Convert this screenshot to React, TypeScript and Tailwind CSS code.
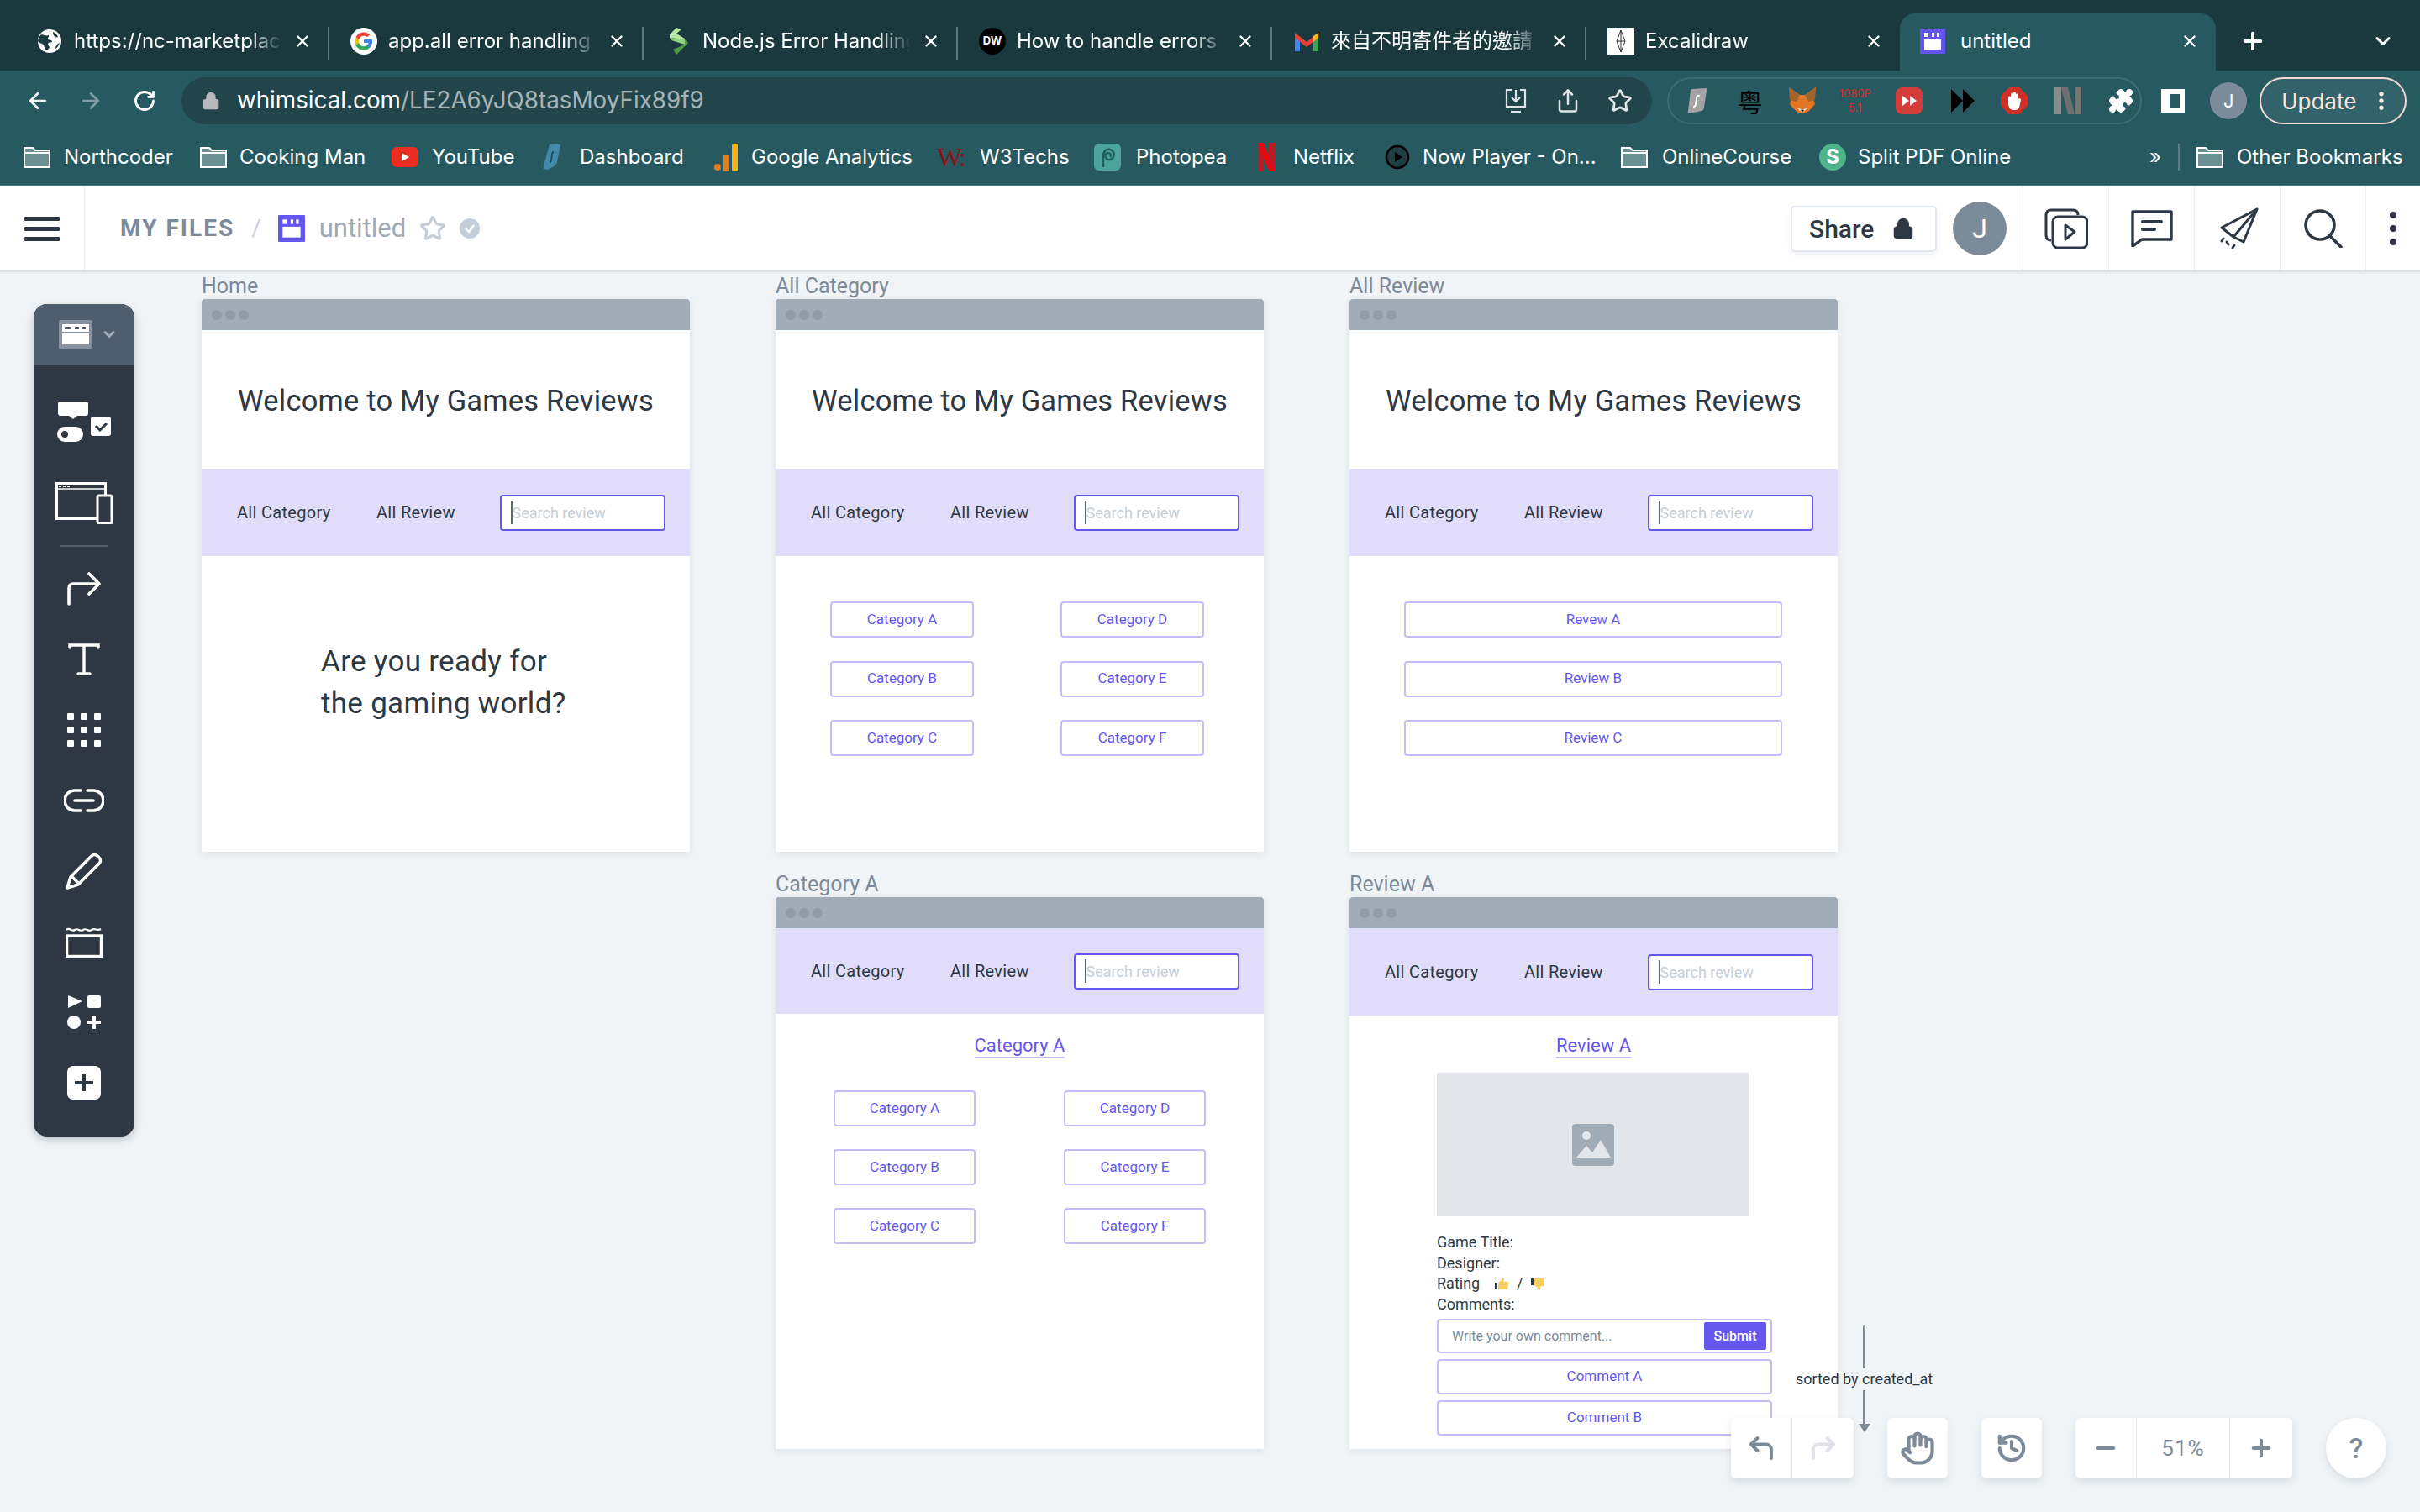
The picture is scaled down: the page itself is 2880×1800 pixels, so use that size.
import React from 'react';
import { ChevronDown, CornerUpLeft, CornerUpRight, EllipsisVertical, Hand, History, Lock, Minus, Plus, Puzzle, RotateCw, Share, Star, X, ArrowLeft, ArrowRight } from 'lucide-react';

const Whimsical = ({ size = 30 }: { size?: number }) => (
  <svg width={size} height={size} viewBox="0 0 30 30" className="shrink-0">
    <rect width="30" height="30" rx="1" fill="#6355ee" />
    <rect x="5" y="5" width="5" height="5" fill="#fff" />
    <rect x="14" y="5" width="3" height="5" fill="#fff" />
    <rect x="20" y="5" width="3" height="5" fill="#fff" />
    <rect x="5" y="13" width="20" height="12" fill="#fff" />
  </svg>
);

const Globe = () => (
  <svg width="30" height="30" viewBox="0 0 30 30">
    <circle cx="15" cy="15" r="14" fill="#fff" />
    <path d="M5 7c4 1 6 2 9 1 1 2-2 3-1 5 2 1 5 0 5 3-2 1-4 0-5 2l2 5c-2 2-3 3-5 3-1-3-1-6-4-8-2-1-4-1-5-3 0-3 2-6 4-8zM19 4c2 1 5 3 6 6-2 1-4 0-5-2-1-1-1-3-1-4zM27 17c-1 3-3 6-5 7 0-3 2-6 5-7z" fill="#19393f" />
  </svg>
);

const GoogleG = () => (
  <svg width="32" height="32" viewBox="0 0 32 32">
    <circle cx="16" cy="16" r="16" fill="#fff" />
    <path d="M26 16.2c0-.8-.1-1.500-.2-2.200H16v4.100h5.600c-.2 1.300-1 2.500-2.100 3.200v2.600h3.400c2-1.800 3.100-4.500 3.100-7.700z" fill="#4285f4" />
    <path d="M16 26.500c2.800 0 5.200-.9 6.900-2.600l-3.400-2.600c-.9.600-2.100 1-3.500 1-2.700 0-5-1.800-5.800-4.300H6.200v2.700c1.700 3.500 5.400 5.800 9.800 5.800z" fill="#34a853" />
    <path d="M10.200 18c-.2-.6-.3-1.300-.3-2s.1-1.400.3-2v-2.700H6.700C6 12.700 5.600 14.300 5.600 16s.4 3.300 1.100 4.700z" fill="#fbbc05" />
    <path d="M16 9.700c1.500 0 2.900.5 4 1.600l3-3C21.200 6.600 18.800 5.600 16 5.600c-4.400 0-8.100 2.300-9.300 5.700l3.500 2.700c.8-2.500 3.100-4.300 5.800-4.300z" fill="#ea4335" />
  </svg>
);

const TabStack = () => (
  <svg width="28" height="32" viewBox="0 0 28 32">
    <path d="M12 0l6 2-6 5 10 6v1L4 12V8z" fill="#b6e6a4" />
    <path d="M4 12l18 2v6L6 15z" fill="#8fd07a" />
    <path d="M22 14l4 4-14 14-4-6 14-6z" fill="#4f9a44" />
  </svg>
);

const Gmail = () => (
  <svg width="30" height="30" viewBox="0 0 30 30">
    <path d="M1 5v22h6V13z" fill="#4285f4" />
    <path d="M29 5v22h-6V13z" fill="#34a853" />
    <path d="M1 5l14 11L29 5v6L15 22 1 11z" fill="#ea4335" />
    <path d="M23 9l6-4v6l-6 5z" fill="#fbbc05" />
  </svg>
);

const TabIcon = ({ kind }: { kind: string }) => {
  if (kind === 'globe') return <Globe />;
  if (kind === 'google') return <GoogleG />;
  if (kind === 'stack') return <TabStack />;
  if (kind === 'gmail') return <Gmail />;
  if (kind === 'whimsical') return <Whimsical />;
  if (kind === 'dw') {
    return <span className="flex h-[32px] w-[32px] items-center justify-center rounded-full bg-black text-[13px] font-bold text-white">DW</span>;
  }
  return (
    <svg width="32" height="32" viewBox="0 0 32 32">
      <rect width="32" height="32" fill="#fff" />
      <path d="M16 3l5 13-5 13-5-13zM16 3v26M11 16h10" fill="none" stroke="#333" strokeWidth="1" />
    </svg>
  );
};

const tabs = [
  { icon: 'globe', title: 'https://nc-marketplace' },
  { icon: 'google', title: 'app.all error handling' },
  { icon: 'stack', title: 'Node.js Error Handling' },
  { icon: 'dw', title: 'How to handle errors' },
  { icon: 'gmail', title: '來自不明寄件者的邀請' },
  { icon: 'excalidraw', title: 'Excalidraw' },
];

function TabStrip() {
  return (
    <div className="flex h-[84px] items-end bg-[#19393f] pl-[17px] pr-[20px]">
      {tabs.map((t, i) => (
        <div key={i} className="relative flex h-[68px] w-[374px] items-center pb-[2px] pl-[25px] pr-[20px]">
          <div className="flex w-[34px] shrink-0 justify-center"><TabIcon kind={t.icon} /></div>
          <span className="ml-[12px] w-[248px] overflow-hidden whitespace-nowrap text-[24px] text-white [mask-image:linear-gradient(to_right,black_84%,transparent)]">{t.title}</span>
          <X size={22} strokeWidth={2.6} className="ml-auto shrink-0 text-white" />
          {i !== 5 && <div className="absolute -right-[1px] top-[16px] h-[40px] w-[2px] bg-[#5c7a7f]" />}
        </div>
      ))}
      <div className="flex h-[68px] w-[376px] items-center rounded-t-[18px] bg-[#275960] pb-[2px] pl-[24px] pr-[20px]">
        <Whimsical />
        <span className="ml-[18px] text-[24px] text-white">untitled</span>
        <X size={22} strokeWidth={2.6} className="ml-auto text-white" />
      </div>
      <div className="flex h-[68px] flex-1 items-center pb-[2px]">
        <Plus size={32} strokeWidth={3} className="ml-[28px] text-white" />
        <ChevronDown size={28} strokeWidth={2.6} className="ml-auto mr-[10px] text-white" />
      </div>
    </div>
  );
}

const FoxIcon = () => (
  <svg width="34" height="32" viewBox="0 0 34 32">
    <path d="M1 0l13 9h6L33 0l-3 14 2 6-7 8-5 3h-6l-5-3-7-8 2-6z" fill="#e27625" />
    <path d="M1 0l13 9-4 8-8-2zM33 0L20 9l4 8 8-2z" fill="#a0642c" />
    <path d="M11 25l6 6 6-6-3 0-3 2-3-2z" fill="#e0c6ad" />
    <path d="M15 27h4l-2 3z" fill="#222" />
  </svg>
);

const ExtensionIcons = () => (
  <div className="flex h-[56px] w-[565px] items-center rounded-full border-[2px] border-[#3f6d74] pl-[10px]">
    <div className="flex w-[48px] justify-center">
      <svg width="24" height="30" viewBox="0 0 24 30"><path d="M6 1l16-1c1 0 2 1 1 3l-3 20c0 2-1 3-3 4L3 30c-2 0-3-1-2-3L4 3c0-1 1-2 2-2z" fill="#a3a3a6" /><path d="M15 9c-3-1-4 1-4 3l-1 7c0 2-1 3-3 3" fill="none" stroke="#fff" strokeWidth="1.800" /></svg>
    </div>
    <div className="ml-[16px] flex w-[48px] justify-center text-[30px] leading-none text-black [font-family:'Noto_Sans_CJK_SC',sans-serif]">粤</div>
    <div className="ml-[15px] flex w-[48px] justify-center"><FoxIcon /></div>
    <div className="ml-[16px] flex w-[48px] flex-col items-center text-[13px] leading-[17px] text-[#d12c2c] [font-family:Inter,sans-serif]"><span>1080P</span><span>5.1</span></div>
    <div className="ml-[17px] flex w-[48px] justify-center">
      <svg width="32" height="32" viewBox="0 0 32 32"><rect width="32" height="32" rx="8" fill="#d43c3c" /><path d="M8 10l8 6-8 6zM17 10l8 6-8 6z" fill="#fff" /></svg>
    </div>
    <div className="ml-[17px] flex w-[48px] justify-center">
      <svg width="30" height="28" viewBox="0 0 30 28"><path d="M1 0l14 14L1 28zM15 0l14 14-14 14z" fill="#000" /></svg>
    </div>
    <div className="ml-[14px] flex w-[48px] justify-center">
      <svg width="32" height="32" viewBox="0 0 32 32"><path d="M10 0h12l10 10v12L22 32H10L0 22V10z" fill="#d03028" /><path d="M9 19V12c0-2 3-2 3 0V8c0-2 3-2 3 0V7c0-2 3-2 3 0v2c0-2 3-2 3 0v5c1-2 3-1 3 1l-2 9c-1 2-3 3-5 3h-2c-3 0-6-3-6-8z" fill="#fff" /></svg>
    </div>
    <div className="ml-[17px] flex w-[48px] justify-center">
      <svg width="32" height="32" viewBox="0 0 32 32"><rect width="8" height="32" fill="#8a8a8a" /><path d="M8 0h8l8 32h-8z" fill="#6f6f6f" /><rect x="24" width="8" height="32" fill="#777" /></svg>
    </div>
    <div className="ml-[16px] flex w-[48px] justify-center"><Puzzle size={32} fill="#fff" strokeWidth={1} className="text-white" /></div>
  </div>
);

function Toolbar() {
  return (
    <div className="flex h-[72px] items-center bg-[#275960] pl-[30px] pr-[16px]">
      <ArrowLeft size={30} strokeWidth={2.200} className="text-white" />
      <ArrowRight size={30} strokeWidth={2.200} className="ml-[33px] text-[#7fa0a4]" />
      <RotateCw size={28} strokeWidth={2.400} className="ml-[35px] text-white" />
      <div className="ml-[30px] flex h-[56px] w-[1752px] items-center rounded-full bg-[#22454c] pl-[24px] pr-[23px]">
        <Lock size={22} fill="#b5b8bc" strokeWidth={2.400} className="text-[#b5b8bc]" />
        <span className="ml-[20px] text-[27.800px] text-white">whimsical.com<span className="text-[#a3b5b8]">/LE2A6yJQ8tasMoyFix89f9</span></span>
        <div className="ml-auto flex items-center gap-[32px] text-[#dfe6e7]">
          <svg width="30" height="30" viewBox="0 0 30 30" fill="none" stroke="currentColor" strokeWidth="2.200"><path d="M10 2H4v20h22V2h-6M15 2v14M10 11l5 5 5-5M9 28h12" /></svg>
          <Share size={30} strokeWidth={2} />
          <Star size={30} strokeWidth={2.200} />
        </div>
      </div>
      <div className="ml-[18px]"><ExtensionIcons /></div>
      <div className="ml-[23px] h-[28px] w-[28px] border-[6px] border-l-[10px] border-white" />
      <div className="ml-[30px] flex h-[44px] w-[44px] items-center justify-center rounded-full bg-[#7c8b99] text-[22px] text-white">J</div>
      <div className="ml-[15px] flex h-[56px] w-[175px] items-center rounded-full border-[2px] border-[#f3d9d5] bg-[#33636a] pl-[24px] text-[26px] text-[#f7e3df]">
        Update
        <EllipsisVertical size={28} strokeWidth={2.600} className="ml-[16px]" />
      </div>
    </div>
  );
}

const Folder = () => (
  <svg width="32" height="26" viewBox="0 0 32 26" className="shrink-0">
    <path d="M1 2h10l3 3h17v20H1z" fill="#6b9094" stroke="#fff" strokeWidth="2" />
    <path d="M1 8h30" stroke="#fff" strokeWidth="2" />
    <path d="M2 9h28v7H2z" fill="#fff" fillOpacity="0.9" />
    <path d="M2 9h28v13H2z" fill="#6b9094" />
  </svg>
);

const BookmarkIcon = ({ kind }: { kind: string }) => {
  if (kind === 'folder') return <Folder />;
  if (kind === 'yt') return <svg width="32" height="24" viewBox="0 0 32 24" className="shrink-0"><rect width="32" height="24" rx="6" fill="#e92e21" /><path d="M12 7l9 5-9 5z" fill="#fff" /></svg>;
  if (kind === 'dash') return <svg width="22" height="32" viewBox="0 0 22 32" className="shrink-0"><path d="M8 1c5-1 12-1 13 1l-4 20c-1 4-6 7-12 9-3 0-5-2-4-5z" fill="#4289a8" /><path d="M13 10c-2 0-2 2-2 3l-1 6c0 2-1 3-2 3" fill="none" stroke="#1d4f63" strokeWidth="1.800" /></svg>;
  if (kind === 'ga') return <svg width="30" height="34" viewBox="0 0 30 34" className="shrink-0"><circle cx="5" cy="29" r="4" fill="#e57d1c" /><rect x="12" y="14" width="7" height="20" fill="#e57d1c" /><rect x="22" y="1" width="7" height="33" rx="2" fill="#f6b21b" /></svg>;
  if (kind === 'w3') return <span className="w-[34px] shrink-0 text-[32px] leading-none tracking-[-3px] text-[#8a1414] [font-family:'Liberation_Serif',serif]">W:</span>;
  if (kind === 'pea') return <svg width="32" height="32" viewBox="0 0 32 32" className="shrink-0"><rect width="32" height="32" rx="6" fill="#4ba59b" /><path d="M11 28V14c0-5 4-8 8-7s6 5 4 9-7 4-9 1 0-6 3-6 4 3 2 5" fill="none" stroke="#1d5f5a" strokeWidth="2.400" /></svg>;
  if (kind === 'netflix') return <svg width="20" height="34" viewBox="0 0 20 34" className="shrink-0"><path d="M0 0h7v34l-7 0z" fill="#b81d24" /><path d="M13 0h7v34h-7z" fill="#b81d24" /><path d="M0 0h7l13 34h-7z" fill="#e50914" /></svg>;
  if (kind === 'now') return <svg width="30" height="30" viewBox="0 0 30 30" className="shrink-0"><circle cx="15" cy="15" r="13" fill="#1f3f45" stroke="#000" strokeWidth="2.600" /><path d="M12 9l9 6-9 6z" fill="#000" /></svg>;
  return <span className="flex h-[32px] w-[32px] shrink-0 items-center justify-center rounded-full bg-[#4eb48a] text-[24px] font-bold text-white">S</span>;
};

function Bookmarks() {
  return (
    <div className="flex h-[66px] items-center border-b-[2px] border-[#4a767c] bg-[#275960] pb-[2px] pl-[28px] text-[24px] text-white">
      <div className="flex w-[210px] items-center gap-[16px]"><BookmarkIcon kind="folder" />Northcoder</div>
      <div className="flex w-[228px] items-center gap-[15px]"><BookmarkIcon kind="folder" />Cooking Man</div>
      <div className="flex w-[180px] items-center gap-[16px]"><BookmarkIcon kind="yt" />YouTube</div>
      <div className="flex w-[203px] items-center gap-[22px]"><BookmarkIcon kind="dash" />Dashboard</div>
      <div className="flex w-[266px] items-center gap-[15px]"><BookmarkIcon kind="ga" />Google Analytics</div>
      <div className="flex w-[187px] items-center gap-[17px]"><BookmarkIcon kind="w3" />W3Techs</div>
      <div className="flex w-[195px] items-center gap-[18px]"><BookmarkIcon kind="pea" />Photopea</div>
      <div className="flex w-[151px] items-center gap-[22px]"><BookmarkIcon kind="netflix" />Netflix</div>
      <div className="flex w-[281px] items-center gap-[15px]"><BookmarkIcon kind="now" />Now Player - On...</div>
      <div className="flex w-[236px] items-center gap-[17px]"><BookmarkIcon kind="folder" />OnlineCourse</div>
      <div className="flex w-[393px] items-center gap-[14px]"><BookmarkIcon kind="s" />Split PDF Online</div>
      <span className="w-[34px] text-[24px]">»</span>
      <div className="h-[32px] w-[2px] bg-[#5c7a7f]" />
      <div className="ml-[20px] flex items-center gap-[16px]"><BookmarkIcon kind="folder" />Other Bookmarks</div>
    </div>
  );
}

function AppHeader() {
  return (
    <header className="relative z-10 flex h-[100px] items-stretch bg-white shadow-[0_2px_3px_rgba(45,56,68,0.12)] [font-family:Roboto,sans-serif]">
      <div className="flex w-[101px] flex-col items-start justify-center gap-[7px] border-r-[1px] border-[#edf0f3] pl-[28px]">
        <div className="h-[5px] w-[44px] rounded-full bg-[#2d3844]" />
        <div className="h-[5px] w-[44px] rounded-full bg-[#2d3844]" />
        <div className="h-[5px] w-[44px] rounded-full bg-[#2d3844]" />
      </div>
      <div className="flex flex-1 items-center pl-[42px]">
        <span className="text-[28px] font-bold tracking-[2px] text-[#7c8a99]">MY FILES</span>
        <span className="ml-[20px] text-[28px] text-[#c9d1d9]">/</span>
        <span className="ml-[20px]"><Whimsical size={32} /></span>
        <span className="ml-[17px] text-[31px] text-[#a0aab5]">untitled</span>
        <Star size={32} strokeWidth={2.400} className="ml-[16px] text-[#c5ced8]" />
        <svg width="24" height="24" viewBox="0 0 24 24" className="ml-[16px]"><circle cx="12" cy="12" r="12" fill="#c5ced8" /><path d="M7 12l4 4 6-8" fill="none" stroke="#fff" strokeWidth="2.400" /></svg>
      </div>
      <div className="flex items-center">
        <div className="flex h-[55px] w-[174px] items-center rounded-[5px] border-[2px] border-[#e2e8f0] pl-[20px] text-[30px] font-medium text-[#2d3844] shadow-[0_3px_6px_rgba(45,56,68,0.06)]">
          Share
          <Lock size={26} strokeWidth={2.800} fill="#2d3844" className="ml-[22px]" />
        </div>
        <div className="ml-[19px] flex h-[64px] w-[64px] items-center justify-center rounded-full bg-[#7c8b99] text-[32px] text-white">J</div>
        <div className="w-[19px]" />
      </div>
      <div className="flex w-[102px] items-center justify-center border-l-[1px] border-[#edf0f3]">
        <svg width="52" height="48" viewBox="0 0 52 48" fill="none" stroke="#2d3844" strokeWidth="3">
          <path d="M8 38c-4 0-6-2-6-6V8c0-4 2-6 6-6h26c4 0 6 2 6 6" />
          <rect x="10" y="10" width="41" height="37" rx="6" />
          <path d="M25 20l11 8-11 9z" strokeLinejoin="round" />
        </svg>
      </div>
      <div className="flex w-[102px] items-center justify-center border-l-[1px] border-[#edf0f3]">
        <svg width="50" height="44" viewBox="0 0 50 44" fill="none" stroke="#2d3844" strokeWidth="3.400" strokeLinejoin="round">
          <path d="M2 2h46v33H13L2 43z" />
          <path d="M14 14h22M14 23h14" strokeLinecap="round" strokeWidth="4" />
        </svg>
      </div>
      <div className="flex w-[102px] items-center justify-center border-l-[1px] border-[#edf0f3]">
        <svg width="50" height="50" viewBox="0 0 50 50" fill="none" stroke="#2d3844" strokeWidth="3" strokeLinejoin="round" strokeLinecap="round">
          <path d="M48 2L6 24l14 11 12 6 16-39zM48 2L20 35" />
          <path d="M8 37l-2 3M14 44l-2-3M19 48l2-3" />
        </svg>
      </div>
      <div className="flex w-[102px] items-center justify-center border-l-[1px] border-[#edf0f3]">
        <svg width="46" height="46" viewBox="0 0 46 46" fill="none" stroke="#2d3844" strokeWidth="3.600" strokeLinecap="round">
          <circle cx="19" cy="19" r="17" />
          <path d="M31 32l13 13" />
        </svg>
      </div>
      <div className="flex w-[65px] flex-col items-center justify-center gap-[8px] border-l-[1px] border-[#edf0f3]">
        <div className="h-[8px] w-[8px] rounded-full bg-[#2d3844]" />
        <div className="h-[8px] w-[8px] rounded-full bg-[#2d3844]" />
        <div className="h-[8px] w-[8px] rounded-full bg-[#2d3844]" />
      </div>
    </header>
  );
}

function LeftTools() {
  return (
    <div className="absolute left-[40px] top-[40px] z-10 h-[991px] w-[120px] overflow-hidden rounded-[16px] bg-[#2d3844] shadow-[0_4px_10px_rgba(45,56,68,0.25)]">
      <div className="flex h-[72px] items-center bg-[#4f5e6e] pl-[30px]">
        <div className="flex h-[34px] w-[40px] items-center justify-center rounded-[2px] bg-[#8793a0]">
          <svg width="32" height="24" viewBox="0 0 32 24"><rect width="32" height="24" fill="#fff" /><rect x="3" y="3" width="8" height="3" fill="#4f5e6e" /><rect x="15" y="3" width="5" height="3" fill="#4f5e6e" /><rect x="23" y="3" width="5" height="3" fill="#4f5e6e" /><rect y="9" width="32" height="2" fill="#8793a0" /></svg>
        </div>
        <ChevronDown size={20} strokeWidth={3.600} className="ml-[10px] text-[#a3adb8]" />
      </div>
      <div className="flex flex-col items-center pt-[19px]">
        <div className="flex h-[97px] items-center">
          <svg width="64" height="48" viewBox="0 0 64 48">
            <rect x="1" width="36" height="17" rx="3" fill="#fff" /><path d="M14 17h10l-5 4z" fill="#fff" />
            <rect y="30" width="31" height="18" rx="9" fill="#fff" /><circle cx="9" cy="39" r="4" fill="#2d3844" />
            <rect x="40" y="18" width="24" height="23" rx="3" fill="#fff" /><path d="M46 29l5 5 8-8" fill="none" stroke="#2d3844" strokeWidth="3" />
          </svg>
        </div>
        <div className="flex h-[97px] items-center">
          <svg width="68" height="50" viewBox="0 0 68 50" fill="none" stroke="#fff" strokeWidth="3">
            <rect x="1.500" y="1.500" width="58" height="42" />
            <path d="M1.500 8h58" strokeWidth="1.500" />
            <path d="M4 5h3M9 5h3M14 5h3" strokeWidth="2" />
            <rect x="50" y="16" width="17" height="33" rx="2" fill="#2d3844" />
          </svg>
        </div>
        <div className="mt-[2px] h-[2px] w-[56px] bg-[#4f5e6e]" />
        <div className="mt-[8px] flex h-[84px] items-center">
          <svg width="40" height="40" viewBox="0 0 40 40" fill="none" stroke="#fff" strokeWidth="3.600" strokeLinecap="round" strokeLinejoin="round"><path d="M2 38V19c0-3 2-5 5-5h31M26 2l12 12-12 12" /></svg>
        </div>
        <div className="flex h-[84px] items-center">
          <svg width="38" height="38" viewBox="0 0 38 38" fill="none" stroke="#fff" strokeWidth="3.400" strokeLinecap="round"><path d="M2 5V2h34v3M19 2v34M12 36h14" /></svg>
        </div>
        <div className="flex h-[84px] items-center">
          <svg width="40" height="40" viewBox="0 0 40 40" fill="#fff">
            <rect width="8" height="8" rx="1" /><rect x="16" width="8" height="8" rx="1" /><rect x="32" width="8" height="8" rx="1" />
            <rect y="16" width="8" height="8" rx="1" /><rect x="16" y="16" width="8" height="8" rx="1" /><rect x="32" y="16" width="8" height="8" rx="1" />
            <rect y="32" width="8" height="8" rx="1" /><rect x="16" y="32" width="8" height="8" rx="1" /><rect x="32" y="32" width="8" height="8" rx="1" />
          </svg>
        </div>
        <div className="flex h-[84px] items-center">
          <svg width="48" height="30" viewBox="0 0 48 30" fill="none" stroke="#fff" strokeWidth="3.600" strokeLinecap="round"><path d="M20 3H13a12 12 0 0 0 0 24h7M28 3h7a12 12 0 0 1 0 24h-7M13 15h22" /></svg>
        </div>
        <div className="flex h-[84px] items-center">
          <svg width="44" height="44" viewBox="0 0 44 44" fill="none" stroke="#fff" strokeWidth="3.600" strokeLinejoin="round"><path d="M2 42l4-13L31 4c2-2 5-2 7 0l2 2c2 2 2 5 0 7L15 38zM7 28l9 9" /></svg>
        </div>
        <div className="flex h-[84px] items-center">
          <svg width="44" height="38" viewBox="0 0 44 38" fill="none" stroke="#fff"><rect x="1.500" y="12" width="41" height="24.500" strokeWidth="3.400" /><path d="M1 5c4-4 6 3 10 0s6 3 10 0 6 3 10 0 6 2 11-1" strokeWidth="2.200" /></svg>
        </div>
        <div className="flex h-[84px] items-center">
          <svg width="40" height="40" viewBox="0 0 40 40" fill="#fff"><path d="M1 0l17 7-17 8z" /><rect x="24" width="16" height="15" rx="2" /><circle cx="8" cy="32" r="8" /><path d="M30 24h4v6h6v4h-6v6h-4v-6h-6v-4h6z" /></svg>
        </div>
        <div className="flex h-[84px] items-center">
          <svg width="40" height="40" viewBox="0 0 40 40"><rect width="40" height="40" rx="7" fill="#fff" /><path d="M20 10v20M9 20h22" stroke="#2d3844" strokeWidth="4" /></svg>
        </div>
      </div>
    </div>
  );
}

const FrameBar = () => (
  <div className="flex h-[37px] items-center gap-[4px] rounded-t-[4px] bg-[#a0acb8] pl-[12px]">
    <div className="h-[12px] w-[12px] rounded-full bg-[#8f9ba8]" />
    <div className="h-[12px] w-[12px] rounded-full bg-[#8f9ba8]" />
    <div className="h-[12px] w-[12px] rounded-full bg-[#8f9ba8]" />
  </div>
);

const FrameNav = ({ className = 'h-[104px]' }: { className?: string }) => (
  <div className={`flex items-center bg-[#e0dcfa] pl-[42px] text-[20px] tracking-[0.3px] text-[#2d3844] ${className}`}>
    <span className="w-[166px]">All Category</span>
    <span className="w-[147px]">All Review</span>
    <div className="flex h-[43px] w-[197px] items-center rounded-[4px] border-[2.500px] border-[#6557ee] bg-white pl-[11px] text-[18px] tracking-normal text-[#c5ced8]">
      <span className="h-[28px] w-[1.500px] bg-[#5a6572]" />
      Search review
    </div>
  </div>
);

const Title = () => (
  <div className="flex h-[165px] items-center justify-center pt-[4px] text-[34.500px] tracking-[0.2px] text-[#2d3844]">Welcome to My Games Reviews</div>
);

const OutlineButton = ({ label, className }: { label: string; className: string }) => (
  <div className={`flex items-center justify-center rounded-[4px] border-[2.500px] border-[#c4bdf8] bg-white text-[#6557ee] ${className}`}>{label}</div>
);

function Frame({ label, className, children }: { label: string; className: string; children: React.ReactNode }) {
  return (
    <section className={`absolute flex w-[581px] flex-col ${className}`}>
      <div className="h-[26px] text-[25px] leading-[22px] text-[#7c8a99]">{label}</div>
      <div className="flex flex-1 flex-col overflow-hidden bg-white shadow-[0_2px_8px_rgba(45,56,68,0.1)]">
        <FrameBar />
        {children}
      </div>
    </section>
  );
}

const CategoryGrid = ({ className }: { className: string }) => (
  <div className={`grid text-[17px] ${className}`}>
    {['A', 'D', 'B', 'E', 'C', 'F'].map((c) => (
      <OutlineButton key={c} label={`Category ${c}`} className="h-[43px]" />
    ))}
  </div>
);

const Heading = ({ label, className }: { label: string; className: string }) => (
  <div className={`flex justify-center ${className}`}>
    <span className="border-b-[2px] border-[#c4bdf8] text-[22px] leading-[27px] text-[#6557ee]">{label}</span>
  </div>
);

const Thumb = ({ down }: { down?: boolean }) => (
  <svg width="16" height="15" viewBox="0 0 16 15" className={down ? 'rotate-180 -scale-x-100' : ''}>
    <rect y="6" width="3" height="8" fill="#2d3844" />
    <path d="M4 6l4-3 1-3 2 1v4h5l-1 9H4z" fill="#f7cf5f" />
  </svg>
);

function Canvas() {
  return (
    <main className="relative flex-1 overflow-hidden bg-[#f0f4f7] [font-family:Roboto,sans-serif]">
      <LeftTools />

      <Frame label="Home" className="left-[240px] top-[8px] h-[684px]">
        <Title />
        <FrameNav />
        <div className="pl-[142px] pt-[101px] text-[35px] leading-[50px] tracking-[0.3px] text-[#2d3844]">
          <div>Are you ready for</div>
          <div>the gaming world?</div>
        </div>
      </Frame>

      <Frame label="All Category" className="left-[923px] top-[8px] h-[684px]">
        <Title />
        <FrameNav />
        <CategoryGrid className="grid-cols-[171px_171px] gap-x-[103px] gap-y-[27.500px] pl-[65px] pt-[54px]" />
      </Frame>

      <Frame label="All Review" className="left-[1606px] top-[8px] h-[684px]">
        <Title />
        <FrameNav />
        <div className="flex flex-col gap-[27.500px] pl-[65px] pt-[54px] text-[17px]">
          <OutlineButton label="Revew A" className="h-[43px] w-[450px]" />
          <OutlineButton label="Review B" className="h-[43px] w-[450px]" />
          <OutlineButton label="Review C" className="h-[43px] w-[450px]" />
        </div>
      </Frame>

      <Frame label="Category A" className="left-[923px] top-[720px] h-[683px]">
        <FrameNav className="h-[102px]" />
        <Heading label="Category A" className="pt-[24px]" />
        <CategoryGrid className="grid-cols-[169px_169px] gap-x-[105px] gap-y-[27px] pl-[69px] pt-[38px]" />
      </Frame>

      <Frame label="Review A" className="left-[1606px] top-[720px] h-[683px]">
        <FrameNav />
        <Heading label="Review A" className="pt-[22px]" />
        <div className="ml-[104px] mt-[17px] flex h-[171px] w-[371px] items-center justify-center bg-[#e2e6eb]">
          <svg width="50" height="50" viewBox="0 0 50 50">
            <rect width="50" height="50" rx="4" fill="#a0acb8" />
            <circle cx="17" cy="14" r="5" fill="#e2e6eb" />
            <path d="M5 40l12-14 7 8 10-15 12 21z" fill="#e2e6eb" />
          </svg>
        </div>
        <div className="ml-[104px] mt-[19px] text-[18px] leading-[24.500px] text-[#2d3844]">
          <div>Game Title:</div>
          <div>Designer:</div>
          <div className="flex items-center">
            <span className="w-[69px]">Rating</span>
            <Thumb />
            <span className="ml-[10px] mr-[10px]">/</span>
            <Thumb down />
          </div>
          <div>Comments:</div>
        </div>
        <div className="ml-[104px] mt-[5px] flex w-[399px] flex-col gap-[7px] text-[17px]">
          <div className="flex h-[41px] items-center rounded-[4px] border-[2.500px] border-[#c4bdf8] pl-[16px] pr-[5px] text-[16px] text-[#7c8a99]">
            Write your own comment...
            <span className="ml-auto flex h-[33px] w-[74px] items-center justify-center rounded-[2px] bg-[#6557ee] font-medium text-white">Submit</span>
          </div>
          <OutlineButton label="Comment A" className="h-[42px]" />
          <OutlineButton label="Comment B" className="h-[42px]" />
        </div>
      </Frame>

      <div className="absolute left-[2137px] top-[1255px] flex w-[163px] flex-col items-center text-[18px] leading-[22px] text-[#2d3844]">
        <div className="h-[52px] w-[3px] rounded-full bg-[#7c8a99]" />
        <span className="whitespace-nowrap py-[2px]">sorted by created_at</span>
        <div className="h-[40px] w-[3px] bg-[#7c8a99]" />
        <div className="h-0 w-0 border-x-[7px] border-t-[10px] border-x-transparent border-t-[#7c8a99]" />
      </div>

      <div className="absolute bottom-[40px] right-[40px] z-10 flex h-[72px] items-stretch gap-[40px] text-[#7c8a99]">
        <div className="flex w-[146px] rounded-[6px] bg-white shadow-[0_4px_10px_rgba(45,56,68,0.12)]">
          <div className="flex w-[73px] items-center justify-center border-r-[1px] border-[#e8ecf0]"><CornerUpLeft size={36} strokeWidth={2.600} /></div>
          <div className="flex flex-1 items-center justify-center text-[#dfe3e7]"><CornerUpRight size={36} strokeWidth={2.600} /></div>
        </div>
        <div className="flex w-[72px] items-center justify-center rounded-[6px] bg-white shadow-[0_4px_10px_rgba(45,56,68,0.12)]"><Hand size={42} strokeWidth={2.400} /></div>
        <div className="flex w-[72px] items-center justify-center rounded-[6px] bg-white shadow-[0_4px_10px_rgba(45,56,68,0.12)]"><History size={38} strokeWidth={2.600} /></div>
        <div className="flex w-[258px] rounded-[6px] bg-white shadow-[0_4px_10px_rgba(45,56,68,0.12)]">
          <div className="flex w-[73px] items-center justify-center border-r-[1px] border-[#e8ecf0]"><Minus size={32} strokeWidth={3} /></div>
          <div className="flex w-[111px] items-center justify-center border-r-[1px] border-[#e8ecf0] text-[26px] tracking-[1px]">51%</div>
          <div className="flex flex-1 items-center justify-center"><Plus size={32} strokeWidth={3} /></div>
        </div>
        <div className="flex w-[72px] items-center justify-center rounded-full bg-white text-[34px] font-medium shadow-[0_4px_10px_rgba(45,56,68,0.12)]">?</div>
      </div>
    </main>
  );
}

export default function App() {
  return (
    <div className="flex h-screen w-screen flex-col overflow-hidden [font-family:Inter,'Noto_Sans_CJK_TC',sans-serif]">
      <TabStrip />
      <Toolbar />
      <Bookmarks />
      <AppHeader />
      <Canvas />
    </div>
  );
}
